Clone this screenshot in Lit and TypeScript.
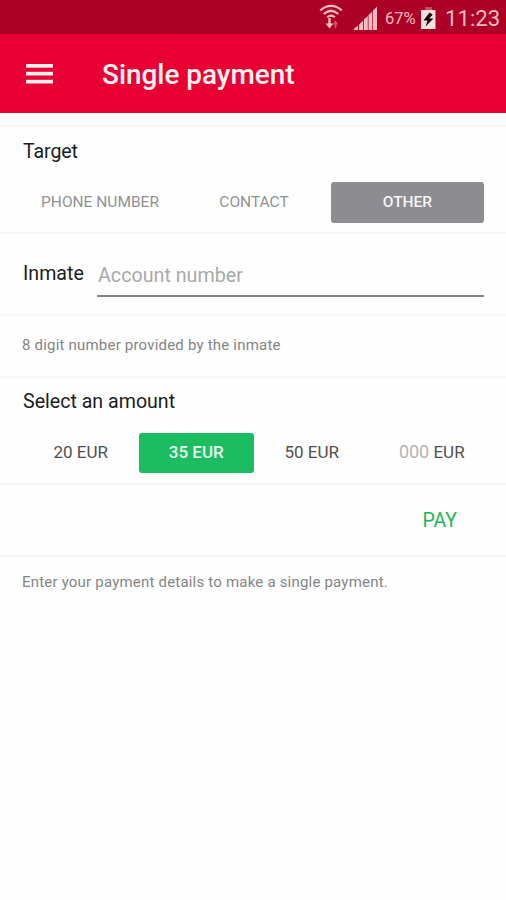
import { LitElement, html, css, svg } from "lit";
import { customElement, property, state } from "lit/decorators.js";
import { classMap } from "lit/directives/class-map.js";

@customElement("status-bar")
class StatusBar extends LitElement {
  static styles = css`
    :host {
      display: flex;
      align-items: center;
      height: 34px;
      box-sizing: border-box;
      padding-right: 6px;
      justify-content: flex-end;
      background: #ad0025;
      color: #f3bcc3;
    }
    svg { display: block; flex: none; }
    .wifi { margin-right: 11px; }
    .signal { margin-right: 8px; }
    .percent { font-size: 16.5px; width: 31px; margin-right: 5px; white-space: nowrap; margin-top: 3px; }
    .battery { margin-right: 9px; }
    .clock { font-size: 22.2px; line-height: 34px; width: 55px; white-space: nowrap; margin-top: 1px; }
  `;
  render() {
    return html`
      <svg class="wifi" width="24" height="34" viewBox="0 0 24 34" fill="none" stroke="#f3bcc3" stroke-width="2.2">
        <path d="M1.2 10.3Q12 1.5 22.8 10.3M4.8 14Q12 7.5 19.2 14M8.2 17.3Q12 13.8 15.8 17.3" />
        <path d="M10.5 18V26" stroke-width="2.4" />
        <path d="M6.5 23.5h8l-4 5z" fill="#f3bcc3" stroke="none" />
        <path d="M16.5 28V23" stroke="#d4526a" stroke-width="1.8" />
        <path d="M13.8 24.5h5.4l-2.7-4z" fill="#d4526a" stroke="none" />
      </svg>
      <svg class="signal" width="23" height="34" viewBox="0 0 23 34" fill="#f3bcc3">
        <path d="M0 30v-1.2l4-3.4V30zM5 30v-5.5l4-3.8V30zM9.8 30V19.8l4-3.8v14zM14.5 30V15l3.8-3.6V30zM19 30V10.5l4-3.8V30z" />
      </svg>
      <span class="percent">67%</span>
      <svg class="battery" width="15" height="34" viewBox="0 0 15 34">
        <path d="M4 7h7v4H4z" fill="#cb4860" />
        <path d="M0 10h14.5v19H0z" fill="#f8dfe0" />
        <path d="M8.5 12.5l-6 8h4L4.5 26.5l8-8H8.3l3.4-4z" fill="#160006" />
      </svg>
      <span class="clock">11:23</span>
    `;
  }
}

@customElement("app-bar")
class AppBar extends LitElement {
  @property() heading = "";
  static styles = css`
    :host {
      display: flex;
      align-items: center;
      height: 79px;
      padding-left: 26px;
      background: #e80034;
      color: #fff3f0;
      box-sizing: border-box;
    }
    .menu { display: block; margin-right: 49px; }
    h1 { margin: 3px 0 0; font-size: 27.9px; font-weight: 500; line-height: 40px; white-space: nowrap; }
  `;
  render() {
    return html`
      <svg class="menu" width="27" height="20" viewBox="0 0 27 20" fill="#fff0ec">
        ${[0, 7.8, 15.8].map((y) => svg`<rect x="0" y=${y} width="27" height="3.7" />`)}
      </svg>
      <h1>${this.heading}</h1>
    `;
  }
}

const TARGETS = ["PHONE NUMBER", "CONTACT", "OTHER"];
const AMOUNTS = ["20", "35", "50"];

@customElement("app-root")
class AppRoot extends LitElement {
  @state() private target = "OTHER";
  @state() private amount = "35";

  static styles = css`
    :host {
      display: flex;
      flex-direction: column;
      height: 900px;
      background: #fefefe;
      font-family: Roboto, "Liberation Sans", sans-serif;
      color: #1c1c1c;
    }
    section, .hint, .actions { box-sizing: border-box; flex: none; border-bottom: 2px solid #f5f5f5; }
    .gap { height: 14px; background: #fcfbfb; border-bottom: 2px solid #f5f5f5; box-sizing: border-box; }
    h2 { margin: 0; font-size: 19.6px; font-weight: 400; line-height: 24px; white-space: nowrap; }
    button {
      font: inherit; border: 0; padding: 0; margin: 0; background: none; color: inherit;
      border-radius: 3px; white-space: nowrap; text-align: center;
    }
    .target { height: 107px; padding: 13px 22px 0 23px; }
    .target h2 { letter-spacing: -0.1px; }
    .tabs { display: grid; grid-template-columns: 154px 154px 153px; height: 41px; margin: 18px 0 0 -23px; padding-left: 23px; font-size: 15.5px; color: #929292; }
    .tabs button { padding-bottom: 2px; }
    .tabs button.on { background: #8d8c91; color: #f6f6f6; font-weight: 500; }
    .inmate { height: 82px; display: flex; padding: 28px 22px 0 23px; border-bottom-color: #f8f8f8; }
    .inmate h2 { width: 74px; }
    .field { flex: 1; height: 35px; box-sizing: border-box; border-bottom: 2px solid #858283; padding: 2px 0 0 1px; font-size: 19.7px; line-height: 24px; color: #a9a9a9; }
    .hint { font-size: 15px; line-height: 20px; color: #858585; padding-left: 22px; white-space: nowrap; }
    .number-hint { height: 62px; padding-top: 19px; letter-spacing: 0.2px; border-bottom-color: #f8f8f8; }
    .amount { height: 107px; padding: 12px 22px 0 23px; }
    .amounts { display: grid; grid-template-columns: repeat(4, 115.5px); height: 40px; margin-top: 19px; font-size: 17px; color: #505050; }
    .amounts button { padding-bottom: 3px; }
    .amounts button.on { background: #1bbd60; color: #e9fff0; font-weight: 500; }
    .amounts .custom { padding-left: 9px; padding-bottom: 4px; }
    .placeholder { color: #b4b4b4; font-size: 18px; }
    .actions { height: 72px; display: flex; justify-content: flex-end; padding: 0 49px 0 0; }
    .pay { font-size: 19.5px; color: #22b65b; padding-top: 1px; }
    .footer { padding-top: 15px; border: 0; letter-spacing: 0.2px; }
  `;

  render() {
    return html`
      <status-bar></status-bar>
      <app-bar heading="Single payment"></app-bar>
      <div class="gap"></div>
      <section class="target">
        <h2>Target</h2>
        <div class="tabs">
          ${TARGETS.map((t) => html`<button class=${classMap({ on: t === this.target })} @click=${() => (this.target = t)}>${t}</button>`)}
        </div>
      </section>
      <section class="inmate">
        <h2>Inmate</h2>
        <div class="field">Account number</div>
      </section>
      <div class="hint number-hint">8 digit number provided by the inmate</div>
      <section class="amount">
        <h2>Select an amount</h2>
        <div class="amounts">
          ${AMOUNTS.map((a) => html`<button class=${classMap({ on: a === this.amount })} @click=${() => (this.amount = a)}>${a} EUR</button>`)}
          <button class="custom"><span class="placeholder">000</span> EUR</button>
        </div>
      </section>
      <div class="actions"><button class="pay">PAY</button></div>
      <div class="hint footer">Enter your payment details to make a single payment.</div>
    `;
  }
}
